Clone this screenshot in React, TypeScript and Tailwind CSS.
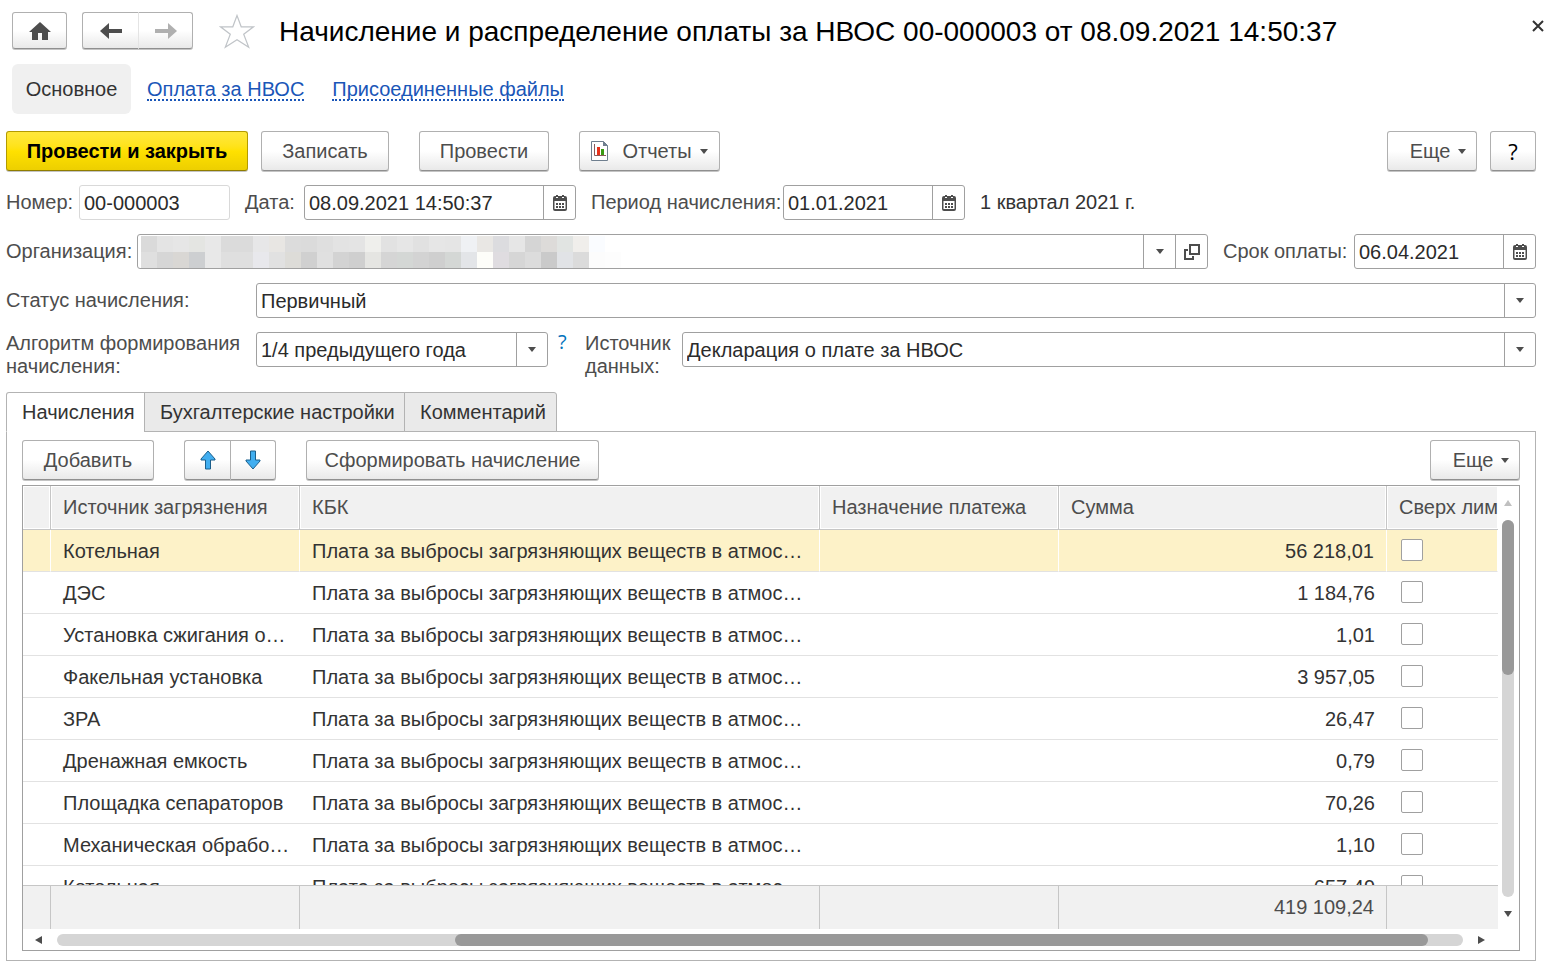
import { useState } from "react";
import type { ReactNode } from "react";
import clsx from "clsx";

interface ChargeRow {
  source: string;
  kbk: string;
  sum: string;
}

const KBK_AIR = "Плата за выбросы загрязняющих веществ в атмос…";

const ROWS: ChargeRow[] = [
  { source: "Котельная", kbk: KBK_AIR, sum: "56 218,01" },
  { source: "ДЭС", kbk: KBK_AIR, sum: "1 184,76" },
  { source: "Установка сжигания о…", kbk: KBK_AIR, sum: "1,01" },
  { source: "Факельная установка", kbk: KBK_AIR, sum: "3 957,05" },
  { source: "ЗРА", kbk: KBK_AIR, sum: "26,47" },
  { source: "Дренажная емкость", kbk: KBK_AIR, sum: "0,79" },
  { source: "Площадка сепараторов", kbk: KBK_AIR, sum: "70,26" },
  { source: "Механическая обрабо…", kbk: KBK_AIR, sum: "1,10" },
  { source: "Котельная", kbk: KBK_AIR, sum: "657,49" },
];

const TABS = [
  { title: "Начисления", width: "w-[139px]" },
  { title: "Бухгалтерские настройки", width: "w-[261px]" },
  { title: "Комментарий", width: "w-[153px]" },
];

// Mosaic that hides the organization name, two rows of cells
const MASK = [
  "dadada e4e4e4 e6e6e6 e4e5e2 e8e8e8 dbdbdb dbdbdb e7e7e8 e8e6e3 dcdcdc dbdbdb dfdfdf e3e3e3 e4e4e4 efefec e2e2e2 e6e6e6 e1e1e1 e6e6e6 e5e5e5 eff1f4 e9e7e4 dcdcdf e6e6e6 d5d5d5 dddbd9 e1e4e2 f0eeeb fafcff ffffff",
  "dfdfdf d6d6d6 d9d7d4 cdcfd1 e8e8e8 dfdfdf dfdfdf e8e8ec e1e1e1 dddcd8 d0d0d0 e0e0e0 d3d3d3 cfcfcf e5e5e2 d5d5d5 d4d7d5 d3d3d3 cfcfcf d4d7d5 e3e5e8 fdfdf9 dfdce0 d6d6d6 dcdcdc cacaca e1e3e6 dbdbdb fcfcfc fdfdfd",
].map((row) => row.split(" "));

const BUTTON =
  "flex items-center justify-center rounded-[3px] border border-[#b0b0b0] border-b-[#8f8f8f] bg-linear-to-b from-white from-50% to-[#e9e9e9] text-[#4d4d4d] shadow-[0_1px_0_#c4c4c4]";
const FIELD = "flex h-[35px] rounded-[3px] border border-[#a0a0a0] bg-white";
const INPUT = "h-full w-full min-w-0 bg-transparent px-1 pt-0.5 text-[#2b2b2b] outline-none";
const ADDON = "flex w-8 shrink-0 items-center justify-center border-l border-[#a0a0a0]";
const LABEL = "shrink-0 text-[#4d4d4d]";
const LINK = "border-b-2 border-dotted border-[#1a56b8] pt-0.5 leading-5 text-[#1a56b8]";

function Caret() {
  return (
    <svg width="8" height="5" viewBox="0 0 8 5" aria-hidden="true">
      <path d="M0 0h8L4 5z" fill="#4d4d4d" />
    </svg>
  );
}

function CalendarIcon() {
  return (
    <svg width="14" height="16" viewBox="0 0 14 16" aria-hidden="true">
      <path
        d="M2 1h1V0h2v1h4V0h2v1h1a2 2 0 0 1 2 2v11a2 2 0 0 1-2 2H2a2 2 0 0 1-2-2V3a2 2 0 0 1 2-2z"
        fill="#4d4d4d"
      />
      <path d="M1.500 6h11v8h-11zM3 2h2v1H3zM9 2h2v1H9z" fill="#fff" />
      <path
        d="M3 8h2v2H3zM6 8h2v2H6zM9 8h2v2H9zM3 11h2v2H3zM6 11h2v2H6zM9 11h2v2H9z"
        fill="#4d4d4d"
      />
    </svg>
  );
}

function OpenIcon() {
  return (
    <svg width="16" height="16" viewBox="0 0 16 16" fill="none" stroke="#4d4d4d" strokeWidth="2" aria-hidden="true">
      <path d="M6 1h9v9H6z" />
      <path d="M4 6H1v9h8v-3" />
    </svg>
  );
}

function ReportIcon() {
  return (
    <svg width="17" height="20" viewBox="0 0 17 20" aria-hidden="true">
      <path d="M.5.5h12l4 4v15H.5z" fill="#fff" stroke="#6f7f8f" />
      <path d="M12 0l5 5h-5z" fill="#6f7f8f" />
      <path d="M3.500 3v11.500H15" fill="none" stroke="#8a5a5a" />
      <path d="M6 6h3v8H6z" fill="#e8311a" />
      <path d="M10 8h3v6h-3z" fill="#3a9a12" />
    </svg>
  );
}

function NavArrow({ color, flip }: { color: string; flip?: boolean }) {
  return (
    <svg width="22" height="16" viewBox="0 0 22 16" aria-hidden="true">
      <path
        d={flip ? "M22 8l-9-8v6H0v4h13v6z" : "M0 8l9-8v6h13v4H9v6z"}
        fill={color}
      />
    </svg>
  );
}

function MoveArrow({ down }: { down?: boolean }) {
  return (
    <svg width="16" height="20" viewBox="0 0 16 20" aria-hidden="true">
      <path
        d={
          down
            ? "M5.500 1h5v9H15v1l-7 8-7-8v-1h4.500z"
            : "M5.500 19h5v-9H15V9L8 1 1 9v1h4.500z"
        }
        fill="#41aef0"
        stroke="#1b5f8c"
        strokeLinejoin="round"
      />
    </svg>
  );
}

interface FieldProps {
  id: string;
  value: string;
  className: string;
}

function DateField({ id, value, className }: FieldProps) {
  return (
    <div className={clsx(FIELD, className)}>
      <input id={id} className={INPUT} defaultValue={value} />
      <button type="button" aria-label="Выбрать дату" className={ADDON}>
        <CalendarIcon />
      </button>
    </div>
  );
}

function SelectField({ id, value, className }: FieldProps) {
  return (
    <div className={clsx("grid h-[35px] rounded-[3px] border border-[#a0a0a0]", className)}>
      <select
        id={id}
        defaultValue={value}
        className="col-start-1 row-start-1 h-full w-full min-w-0 appearance-none bg-transparent pt-0.5 pr-8 pl-1 text-[#2b2b2b] outline-none"
      >
        <option>{value}</option>
      </select>
      <span className="pointer-events-none col-start-1 row-start-1 flex w-[31px] items-center justify-center justify-self-end border-l border-[#a0a0a0]">
        <Caret />
      </span>
    </div>
  );
}

function MoreButton() {
  return (
    <button type="button" className={clsx(BUTTON, "h-10 w-[90px] gap-2 pl-3")}>
      Еще
      <Caret />
    </button>
  );
}

function HeadCell({ children }: { children?: ReactNode }) {
  return (
    <th
      scope="col"
      className="sticky top-0 z-10 h-11 overflow-hidden border-r border-b border-[#c6c6c6] bg-[#f1f1f1] pl-3 text-left font-normal whitespace-nowrap text-[#4d4d4d] shadow-[inset_0_0_0_1px_#fff] last:border-r-0"
    >
      {children}
    </th>
  );
}

function FootCell({ children }: { children?: ReactNode }) {
  return (
    <td className="sticky bottom-0 z-10 h-11 border-t border-r border-[#c6c6c6] bg-[#f1f1f1] pr-3 text-right text-[#4d4d4d] last:border-r-0">
      {children}
    </td>
  );
}

function ChargesTable() {
  const [selected, setSelected] = useState(0);

  return (
    <div className="border border-[#a0a0a0]">
      <div className="flex">
        <div className="h-[443px] min-w-0 flex-1 overflow-hidden">
          <table className="w-full table-fixed border-separate border-spacing-0">
            <colgroup>
              <col className="w-7" />
              <col className="w-[249px]" />
              <col />
              <col className="w-[239px]" />
              <col className="w-[328px]" />
              <col className="w-[111px]" />
            </colgroup>
            <thead>
              <tr>
                <HeadCell />
                <HeadCell>Источник загрязнения</HeadCell>
                <HeadCell>КБК</HeadCell>
                <HeadCell>Назначение платежа</HeadCell>
                <HeadCell>Сумма</HeadCell>
                <HeadCell>Сверх лимита</HeadCell>
              </tr>
            </thead>
            <tbody>
              {ROWS.map((row, index) => {
                const cell = clsx(
                  "h-[42px] border-b border-[#e2e2e2]",
                  index === selected && "border-r border-r-white bg-[#fdf2c8]"
                );
                return (
                  <tr key={index} onClick={() => setSelected(index)}>
                    <td className={cell} />
                    <td className={clsx(cell, "truncate pt-0.5 pr-2 pl-3")}>{row.source}</td>
                    <td className={clsx(cell, "truncate pt-0.5 pr-3 pl-3")}>{row.kbk}</td>
                    <td className={cell} />
                    <td className={clsx(cell, "pt-0.5 pr-3 text-right")}>{row.sum}</td>
                    <td className={clsx(cell, "pb-0.5 pl-3.5")}>
                      <input
                        type="checkbox"
                        aria-label={`Сверх лимита: ${row.source}`}
                        className="block size-[22px] appearance-none rounded-[2px] border border-[#a0a0a0] bg-white checked:bg-[#4d4d4d]"
                      />
                    </td>
                  </tr>
                );
              })}
            </tbody>
            <tfoot>
              <tr>
                <FootCell />
                <FootCell />
                <FootCell />
                <FootCell />
                <FootCell>419 109,24</FootCell>
                <FootCell />
              </tr>
            </tfoot>
          </table>
        </div>

        {/* Vertical scrollbar */}
        <div className="flex w-[21px] flex-col items-center pt-3.5 pr-px pb-3">
          <svg width="8" height="6" viewBox="0 0 8 6" aria-hidden="true">
            <path d="M4 0l4 6H0z" fill="#c0c0c0" />
          </svg>
          <div className="my-3.5 flex w-3 flex-1 flex-col rounded-full bg-[#d5d5d5]">
            <div className="flex-[154] rounded-full bg-[#999]" />
            <div className="flex-[221]" />
          </div>
          <svg width="8" height="6" viewBox="0 0 8 6" aria-hidden="true">
            <path d="M0 0h8L4 6z" fill="#4d4d4d" />
          </svg>
        </div>
      </div>

      {/* Horizontal scrollbar */}
      <div className="flex h-[21px] items-center pr-[34px] pl-3">
        <svg width="7" height="8" viewBox="0 0 7 8" aria-hidden="true">
          <path d="M7 0v8L0 4z" fill="#4d4d4d" />
        </svg>
        <div className="mx-[15px] flex h-3 flex-1 rounded-full bg-[#d5d5d5]">
          <div className="flex-[398]" />
          <div className="flex-[974] rounded-full bg-[#999]" />
          <div className="flex-[35]" />
        </div>
        <svg width="7" height="8" viewBox="0 0 7 8" aria-hidden="true">
          <path d="M0 0v8l7-4z" fill="#4d4d4d" />
        </svg>
      </div>
    </div>
  );
}

export default function App() {
  const [tab, setTab] = useState(0);

  return (
    <main className="bg-white pr-5 pb-1.5 pl-1.5 font-['Liberation_Sans',Arial,sans-serif] text-[20px] leading-[23px] text-[#333]">
      {/* Window header */}
      <header className="flex items-center pt-3 pl-1.5">
        <button type="button" aria-label="Домой" className={clsx(BUTTON, "h-[37px] w-[55px]")}>
          <svg width="22" height="18" viewBox="0 0 22 18" aria-hidden="true">
            <path d="M11 0l11 10h-3v8h-6v-7H9v7H3v-8H0z" fill="#4d4d4d" />
          </svg>
        </button>
        <div className="ml-[15px] flex">
          <button type="button" aria-label="Назад" className={clsx(BUTTON, "h-[37px] w-14 rounded-r-none border-r-0")}>
            <NavArrow color="#4d4d4d" />
          </button>
          <button type="button" aria-label="Вперед" className={clsx(BUTTON, "h-[37px] w-[55px] rounded-l-none border-l-[#e4e4e4]")}>
            <NavArrow color="#b0b0b0" flip />
          </button>
        </div>
        <button type="button" aria-label="В избранное" className="ml-[26px]">
          <svg width="36" height="36" viewBox="0 0 36 36" aria-hidden="true">
            <path
              d="M18 2.500l4.200 11.300h12.300l-9.800 7.500 5 13L18 26.800 6.300 34.300l5-13L1.500 13.800h12.300z"
              fill="#fff"
              stroke="#c0c4c8"
              strokeWidth="1.200"
            />
          </svg>
        </button>
        <h1 className="ml-6 flex-1 pt-0.5 text-[28px] leading-8 whitespace-nowrap text-black">
          Начисление и распределение оплаты за НВОС 00-000003 от 08.09.2021 14:50:37
        </h1>
        <button type="button" aria-label="Закрыть" className="-mr-4 self-start p-2">
          <svg width="12" height="12" viewBox="0 0 12 12" aria-hidden="true">
            <path d="M1 1l10 10M11 1L1 11" stroke="#333" strokeWidth="2" />
          </svg>
        </button>
      </header>

      <nav className="mt-[15px] flex items-center pl-1.5">
        <a href="#main" className="flex h-[50px] w-[119px] items-center justify-center rounded-md bg-[#f0f0f0]">
          Основное
        </a>
        <a href="#payment" className={clsx(LINK, "ml-4")}>
          Оплата за НВОС
        </a>
        <a href="#files" className={clsx(LINK, "ml-7")}>
          Присоединенные файлы
        </a>
      </nav>

      {/* Command bar */}
      <div className="mt-[17px] flex">
        <button
          type="button"
          className="h-10 w-[242px] rounded-[3px] border border-[#b39b00] border-b-[#8f7c00] bg-linear-to-b from-[#ffe83b] via-[#ffe100] to-[#edcf00] font-bold text-black shadow-[0_1px_0_#c4c4c4]"
        >
          Провести и закрыть
        </button>
        <button type="button" className={clsx(BUTTON, "ml-[13px] h-10 w-32")}>
          Записать
        </button>
        <button type="button" className={clsx(BUTTON, "ml-[30px] h-10 w-[130px]")}>
          Провести
        </button>
        <button type="button" className={clsx(BUTTON, "ml-[30px] h-10 w-[141px]")}>
          <ReportIcon />
          <span className="mr-2 ml-3.5">Отчеты</span>
          <Caret />
        </button>
        <div className="ml-auto flex gap-[13px]">
          <MoreButton />
          <button
            type="button"
            aria-label="Справка"
            className={clsx(BUTTON, "h-10 w-[46px] font-['Open_Sans',sans-serif] text-[22px] font-medium text-black")}
          >
            ?
          </button>
        </div>
      </div>

      {/* Document fields */}
      <form className="mt-3.5 flex flex-col gap-3.5">
        <div className="flex items-center gap-[15px]">
          <div className="flex items-center">
            <label htmlFor="number" className={clsx(LABEL, "w-[73px]")}>Номер:</label>
            <div className="flex h-[35px] w-[151px] rounded-[3px] border border-[#d9d9d9]">
              <input id="number" className={INPUT} defaultValue="00-000003" />
            </div>
          </div>
          <div className="flex items-center">
            <label htmlFor="date" className={clsx(LABEL, "w-[59px]")}>Дата:</label>
            <DateField id="date" value="08.09.2021 14:50:37" className="w-[272px]" />
          </div>
          <div className="flex items-center">
            <label htmlFor="period" className={clsx(LABEL, "w-48")}>Период начисления:</label>
            <DateField id="period" value="01.01.2021" className="w-[182px]" />
          </div>
          <span>1 квартал 2021 г.</span>
        </div>

        <div className="flex items-center">
          <label htmlFor="organization" className={clsx(LABEL, "w-[131px]")}>Организация:</label>
          <div className={clsx(FIELD, "mr-[15px] flex-1")}>
            <div className="grid min-w-0 flex-1">
              <input id="organization" className={clsx(INPUT, "col-start-1 row-start-1")} />
              <div className="pointer-events-none col-start-1 row-start-1 px-[3px] pt-px" aria-hidden="true">
                {MASK.map((row, y) => (
                  <div key={y} className="flex">
                    {row.map((color, x) => (
                      <span key={x} className="size-4" style={{ backgroundColor: `#${color}` }} />
                    ))}
                  </div>
                ))}
              </div>
            </div>
            <button type="button" aria-label="Выбрать" className={ADDON}>
              <Caret />
            </button>
            <button type="button" aria-label="Открыть" className={ADDON}>
              <OpenIcon />
            </button>
          </div>
          <label htmlFor="due" className={clsx(LABEL, "w-[131px]")}>Срок оплаты:</label>
          <DateField id="due" value="06.04.2021" className="w-[182px]" />
        </div>

        <div className="flex items-center">
          <label htmlFor="status" className={clsx(LABEL, "w-[250px]")}>Статус начисления:</label>
          <SelectField id="status" value="Первичный" className="flex-1" />
        </div>

        <div className="flex items-start">
          <label htmlFor="algorithm" className={clsx(LABEL, "w-[250px]")}>
            Алгоритм формирования начисления:
          </label>
          <SelectField id="algorithm" value="1/4 предыдущего года" className="w-[292px]" />
          <button
            type="button"
            aria-label="Подсказка"
            className="ml-2.5 w-[27px] text-left font-['Open_Sans',sans-serif] leading-5 font-medium text-[#0072bc]"
          >
            ?
          </button>
          <label htmlFor="data-source" className={clsx(LABEL, "w-[97px]")}>
            Источник данных:
          </label>
          <SelectField id="data-source" value="Декларация о плате за НВОС" className="flex-1" />
        </div>
      </form>

      {/* Tabs */}
      <div role="tablist" className="mt-3.5 flex">
        {TABS.map(({ title, width }, index) => (
          <button
            key={title}
            type="button"
            role="tab"
            aria-selected={index === tab}
            onClick={() => setTab(index)}
            className={clsx(
              "z-10 -mb-px h-10 border border-[#b3b3b3] pl-[15px] text-left whitespace-nowrap not-first:-ml-px first:rounded-tl-[3px] last:rounded-tr-[3px]",
              width,
              index === tab ? "border-b-white bg-white" : "bg-[#eaeaea]"
            )}
          >
            {title}
          </button>
        ))}
      </div>
      <section className="border border-[#b3b3b3] px-[15px] pt-2 pb-[9px]">
        <div className="mb-[5px] flex">
          <button type="button" className={clsx(BUTTON, "h-10 w-[132px]")}>
            Добавить
          </button>
          <button type="button" aria-label="Переместить вверх" className={clsx(BUTTON, "ml-[30px] h-10 w-[46px] rounded-r-none border-r-0")}>
            <MoveArrow />
          </button>
          <button type="button" aria-label="Переместить вниз" className={clsx(BUTTON, "h-10 w-[46px] rounded-l-none")}>
            <MoveArrow down />
          </button>
          <button type="button" className={clsx(BUTTON, "ml-[30px] h-10 w-[293px]")}>
            Сформировать начисление
          </button>
          <div className="ml-auto">
            <MoreButton />
          </div>
        </div>
        <ChargesTable />
      </section>
    </main>
  );
}
